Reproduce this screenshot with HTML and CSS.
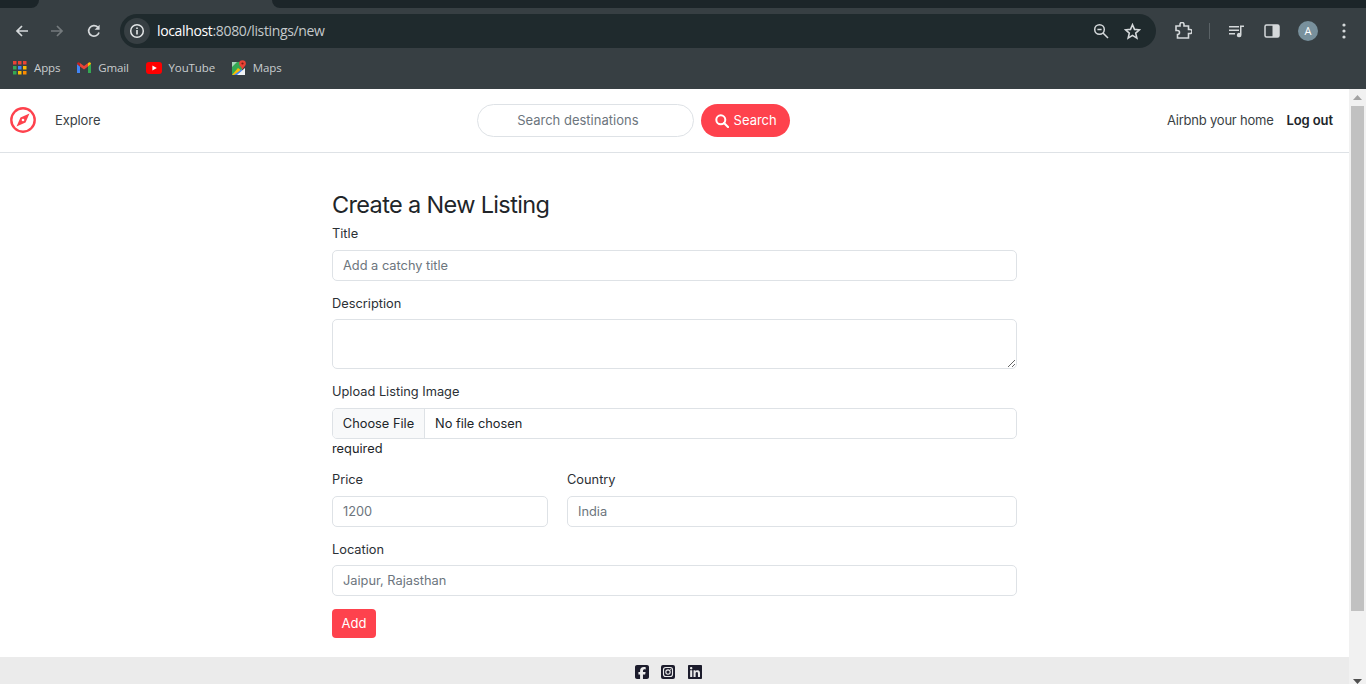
FILE: index.html
```html
<!DOCTYPE html>
<html>
<head>
    <meta charset="UTF-8">
    <title>Create a New Listing</title>
    <link rel="stylesheet" href="styles.css">
</head>
<body>
    <div class="browser">
        <div class="tabStrip">
            <div class="tabLeft"></div>
            <div class="tabActive"></div>
            <div class="tabRight"></div>
        </div>
        <div class="toolbar">
            <div class="navButtons">
                <svg class="navIcon" viewBox="0 0 16 16"><path d="M14 8H3M8 3L3 8l5 5" fill="none" stroke="#d5d9db" stroke-width="1.7"/></svg>
                <svg class="navIcon" viewBox="0 0 16 16"><path d="M2 8h11M8 3l5 5-5 5" fill="none" stroke="#747a7d" stroke-width="1.7"/></svg>
                <svg class="navIcon reloadIcon" viewBox="0 0 16 16"><path d="M13 9.500A5.300 5.300 0 1 1 11.800 4.200" fill="none" stroke="#d5d9db" stroke-width="1.7"/><path d="M13.600 1.800v5h-5z" fill="#d5d9db"/></svg>
            </div>
            <div class="addressBar">
                <span class="siteInfo">
                    <svg viewBox="0 0 16 16" width="16" height="16"><circle cx="8" cy="8" r="6.300" fill="none" stroke="#e3e6e7" stroke-width="1.500"/><path d="M8 7v4.400M8 4.400v1.500" stroke="#e3e6e7" stroke-width="1.600"/></svg>
                </span>
                <span class="url"><b>localhost</b>:8080/listings/new</span>
                <svg class="zoomIcon" viewBox="0 0 16 16" width="16" height="16"><circle cx="6.500" cy="6.500" r="4.800" fill="none" stroke="#d5d9db" stroke-width="1.500"/><path d="M10 10l5 5M4.400 6.500h4.200" stroke="#d5d9db" stroke-width="1.500"/></svg>
                <svg class="starIcon" viewBox="0 0 16 16" width="17" height="17"><path d="M8 1.600l1.900 4.400 4.700.4-3.600 3.100 1.100 4.700L8 11.700l-4.100 2.500L5 9.500 1.400 6.400l4.700-.4z" fill="none" stroke="#d5d9db" stroke-width="1.500"/></svg>
            </div>
            <div class="toolIcons">
                <svg class="extIcon" viewBox="0 0 18 18" width="18" height="18"><path d="M2 4.500h4V3a2 2 0 0 1 4 0v1.500h4.500V8H16a2 2 0 0 1 0 4h-1.500v4.500H3.500V13a2 2 0 0 0 0-4H2z" fill="none" stroke="#d5d9db" stroke-width="1.600" transform="translate(0 -.5)"/></svg>
                <span class="toolDivider"></span>
                <svg class="mediaIcon" viewBox="0 0 16 16" width="16" height="16"><path d="M0 3h10v1.500H0zM0 6.500h10V8H0zM0 10h6v1.500H0z" fill="#d5d9db"/><path d="M11 2.500h4V4h-2.500v8a2.300 2.300 0 1 1-1.500-2.100z" fill="#d5d9db"/></svg>
                <svg class="panelIcon" viewBox="0 0 16 16" width="16" height="16"><rect x="1" y="2" width="14" height="12" rx="1.500" fill="none" stroke="#d5d9db" stroke-width="1.500"/><rect x="8.500" y="2" width="6.500" height="12" fill="#d5d9db"/></svg>
                <span class="avatar">A</span>
                <svg class="menuIcon" viewBox="0 0 4 16" width="4" height="16"><circle cx="2" cy="2" r="1.600" fill="#d5d9db"/><circle cx="2" cy="8" r="1.600" fill="#d5d9db"/><circle cx="2" cy="14" r="1.600" fill="#d5d9db"/></svg>
            </div>
        </div>
        <div class="bookmarks">
            <span class="bookmark">
                <svg viewBox="0 0 14 14" width="14" height="14">
                    <path d="M0 0h3.500v3.500H0z" fill="#ea4335"/><path d="M5 0h3.500v3.500H5z" fill="#ea4335"/><path d="M10 0h3.500v3.500H10z" fill="#ea4335"/>
                    <path d="M0 5h3.500v3.500H0z" fill="#34a853"/><path d="M5 5h3.500v3.500H5z" fill="#4285f4"/><path d="M10 5h3.500v3.500H10z" fill="#fbbc04"/>
                    <path d="M0 10h3.500v3.500H0z" fill="#34a853"/><path d="M5 10h3.500v3.500H5z" fill="#fbbc04"/><path d="M10 10h3.500v3.500H10z" fill="#fb8c00"/>
                </svg>
                Apps
            </span>
            <span class="bookmark">
                <svg viewBox="0 0 14 11" width="14" height="11">
                    <path d="M0 2v9h3V4.500z" fill="#4285f4"/><path d="M11 4.500V11h3V2z" fill="#34a853"/>
                    <path d="M3 4.500L7 7.500l4-3V1L7 4 3 1z" fill="#ea4335"/><path d="M0 2l3 2.500V1L2 .4C1 -.1 0 .7 0 2z" fill="#c5221f"/><path d="M14 2l-3 2.500V1l1-.6c1-.5 2 .3 2 1.600z" fill="#fbbc04"/>
                </svg>
                Gmail
            </span>
            <span class="bookmark">
                <svg viewBox="0 0 16 12" width="16" height="12"><rect width="16" height="12" rx="3" fill="#f00"/><path d="M6.400 3.500L10.800 6l-4.400 2.500z" fill="#fff"/></svg>
                YouTube
            </span>
            <span class="bookmark">
                <svg viewBox="0 0 14 15" width="14" height="15">
                    <path d="M0 2h10v13H0z" fill="#34a853"/><path d="M0 15L6 8l4 3v4z" fill="#fbbc04"/><path d="M2 15l8-6v6z" fill="#4285f4"/><path d="M0 2h5L0 7z" fill="#a8d5ba"/><path d="M5 15l8-7v7z" fill="#f1f3f4"/>
                    <circle cx="10.500" cy="3.500" r="3.300" fill="#ea4335"/><circle cx="10.500" cy="3.500" r="1.100" fill="#7a1c14"/><path d="M8 5.500l2.500 4 2.500-4z" fill="#ea4335"/>
                </svg>
                Maps
            </span>
        </div>
    </div>

    <div class="viewport">
        <div class="page">
            <nav class="navbar">
                <svg class="logo" viewBox="0 0 26 26" width="26" height="26">
                    <circle cx="13" cy="13" r="11.700" fill="none" stroke="#fe424d" stroke-width="2.400"/>
                    <path d="M19.500 6.500L15.500 15.500 6.500 19.500 10.500 10.500z" fill="#fe424d"/>
                    <circle cx="13" cy="13" r="1.300" fill="#fff"/>
                </svg>
                <a class="navLink exploreLink">Explore</a>
                <form class="searchForm">
                    <input class="searchInput" type="text" placeholder="Search destinations">
                    <button class="searchBtn" type="button">
                        <svg viewBox="0 0 14 14" width="14" height="14"><circle cx="5.800" cy="5.800" r="4.500" fill="none" stroke="#fff" stroke-width="2"/><path d="M9 9l4 4" stroke="#fff" stroke-width="2.200" stroke-linecap="round"/></svg>
                        Search
                    </button>
                </form>
                <div class="navRight">
                    <a class="navLink homeLink">Airbnb your home</a>
                    <a class="navLink strong">Log out</a>
                </div>
            </nav>

            <main class="content">
                <h3 class="title">Create a New Listing</h3>
                <form class="listingForm">
                    <div class="field">
                        <label>Title</label>
                        <input class="control" type="text" placeholder="Add a catchy title">
                    </div>
                    <div class="field">
                        <label>Description</label>
                        <textarea class="control area"></textarea>
                    </div>
                    <div class="field upload">
                        <label>Upload Listing Image</label>
                        <input class="control fileControl" type="file">
                        <div class="hint">required</div>
                    </div>
                    <div class="twoCol">
                        <div class="field">
                            <label>Price</label>
                            <input class="control" type="text" placeholder="1200">
                        </div>
                        <div class="field">
                            <label>Country</label>
                            <input class="control" type="text" placeholder="India">
                        </div>
                    </div>
                    <div class="field">
                        <label>Location</label>
                        <input class="control" type="text" placeholder="Jaipur, Rajasthan">
                    </div>
                    <button class="addBtn" type="button">Add</button>
                </form>
            </main>

            <footer class="footer">
                <svg viewBox="0 0 448 512" width="14" height="16"><path fill="#1c1c2c" d="M64 32C28.700 32 0 60.700 0 96V416c0 35.300 28.700 64 64 64h98.200V334.200H109.400V256h52.800V222.300c0-87.100 39.400-127.500 125-127.500c16.200 0 44.200 3.200 55.700 6.400V172c-6-.6-16.500-1-29.600-1c-42 0-58.200 15.900-58.200 57.200V256h83.600l-14.400 78.200H255V480H384c35.300 0 64-28.700 64-64V96c0-35.300-28.700-64-64-64H64z"/></svg>
                <svg viewBox="0 0 448 512" width="14" height="16"><rect y="32" width="448" height="448" rx="64" fill="#1c1c2c"/><rect x="80" y="112" width="288" height="288" rx="72" fill="none" stroke="#eaeaea" stroke-width="36"/><circle cx="224" cy="256" r="70" fill="none" stroke="#eaeaea" stroke-width="36"/><circle cx="310" cy="170" r="18" fill="#eaeaea"/></svg>
                <svg viewBox="0 0 448 512" width="14" height="16"><path fill="#1c1c2c" d="M416 32H31.900C14.300 32 0 46.500 0 64.300v383.400C0 465.500 14.300 480 31.900 480H416c17.600 0 32-14.500 32-32.300V64.300c0-17.800-14.400-32.300-32-32.300zM135.400 416H69V202.200h66.500V416zm-33.200-243c-21.300 0-38.500-17.300-38.500-38.500S80.900 96 102.200 96c21.200 0 38.500 17.300 38.500 38.500 0 21.300-17.200 38.500-38.500 38.500zm282.100 243h-66.400V312c0-24.800-.5-56.700-34.500-56.700-34.600 0-39.900 27-39.900 54.900V416h-66.400V202.200h63.700v29.200h.9c8.900-16.800 30.600-34.500 62.900-34.500 67.200 0 79.700 44.300 79.700 101.900V416z"/></svg>
            </footer>
        </div>

        <div class="scrollbar">
            <svg class="scrollArrow" viewBox="0 0 9 5" width="9" height="5"><path d="M4.500 0L9 5H0z" fill="#a3a3a3"/></svg>
            <div class="scrollThumb"></div>
            <svg class="scrollArrow bottom" viewBox="0 0 9 5" width="9" height="5"><path d="M0 0h9L4.500 5z" fill="#505050"/></svg>
        </div>
    </div>
</body>
</html>
```

FILE: styles.css
```css
html, body {
    padding: 0;
    margin: 0;
    width: 100%;
    height: 100%;
    overflow: hidden;
}

body {
    font-family: "Inter", "Liberation Sans", sans-serif;
    background-color: #fff;
    color: #212529;
    font-size: 12.8px;
    line-height: 19.2px;
    display: flex;
    flex-direction: column;
}

/* browser chrome */

.browser {
    height: 89px;
    flex: none;
    background-color: #373f43;
    font-family: "Open Sans", "Liberation Sans", sans-serif;
}

.tabStrip {
    height: 8px;
    display: flex;
}

.tabLeft {
    width: 39px;
    background-color: #1c2529;
    border-bottom-right-radius: 8px;
}

.tabActive {
    width: 233px;
}

.tabRight {
    flex: 1;
    background-color: #1c2529;
    border-bottom-left-radius: 8px;
}

.toolbar {
    height: 46px;
    display: flex;
    align-items: center;
}

.navButtons {
    width: 120px;
    display: flex;
    align-items: center;
    gap: 19px;
    padding-left: 14px;
    box-sizing: border-box;
}

.navIcon {
    width: 16px;
    height: 16px;
    flex: none;
}

.reloadIcon {
    margin-left: 2px;
}

.addressBar {
    width: 1036px;
    height: 34px;
    display: flex;
    align-items: center;
    background-color: #1f2a2d;
    border-radius: 17px;
    box-sizing: border-box;
    padding-left: 4px;
}

.siteInfo {
    width: 26px;
    height: 26px;
    border-radius: 50%;
    background-color: #373f43;
    display: flex;
    align-items: center;
    justify-content: center;
}

.url {
    margin-left: 7px;
    font-size: 14px;
    color: #c4c9cb;
    letter-spacing: -0.35px;
}

.url b {
    font-weight: 400;
    color: #fff;
}

.zoomIcon {
    margin-left: auto;
    margin-right: 2px;
}

.starIcon {
    margin-left: 13px;
    margin-right: 15px;
}

.toolIcons {
    flex: 1;
    display: flex;
    align-items: center;
    padding-left: 18px;
}

.toolDivider {
    width: 1px;
    height: 16px;
    background-color: #5a6266;
    margin-left: 17px;
    margin-right: 19px;
}

.panelIcon {
    margin-left: 19px;
}

.avatar {
    width: 20px;
    height: 20px;
    margin-left: 18px;
    border-radius: 50%;
    background-color: #78909c;
    color: #fff;
    font-size: 11px;
    line-height: 20px;
    text-align: center;
}

.menuIcon {
    margin-left: 24px;
}

.bookmarks {
    height: 28px;
    display: flex;
    align-items: center;
    gap: 16.8px;
    padding-left: 13px;
    font-size: 11.5px;
    letter-spacing: -0.12px;
    color: #c9cdcf;
}

.bookmark {
    display: flex;
    align-items: center;
    gap: 7px;
}

/* page */

.viewport {
    flex: 1;
    display: flex;
    min-height: 0;
}

.page {
    flex: 1;
    display: flex;
    flex-direction: column;
    min-width: 0;
}

.navbar {
    height: 63px;
    flex: none;
    display: flex;
    align-items: center;
    border-bottom: 1px solid #dee2e6;
    padding-left: 10px;
    padding-right: 16px;
}

.logo {
    margin-bottom: 1px;
}

.navLink {
    color: #3a3f44;
    font-size: 13px;
    letter-spacing: -0.1px;
}

.exploreLink {
    margin-left: 19px;
}

.homeLink {
    letter-spacing: -0.22px;
}

.strong {
    color: #212529;
    font-weight: 600;
    margin-left: 13px;
}

.searchForm {
    margin-left: auto;
    display: flex;
    gap: 7px;
}

.searchInput {
    width: 217px;
    height: 33px;
    box-sizing: border-box;
    border: 1px solid #dee2e6;
    border-radius: 17px;
    padding: 0 10px 2px 39px;
    font: inherit;
    font-size: 13px;
    outline: none;
}

.searchBtn {
    width: 89px;
    height: 33px;
    border: none;
    border-radius: 17px;
    background-color: #fe424d;
    color: #fff;
    font: inherit;
    font-size: 13px;
    display: flex;
    align-items: center;
    justify-content: center;
    gap: 5px;
}

.navRight {
    margin-left: auto;
    display: flex;
    align-items: center;
}

.content {
    flex: 1;
    width: 685px;
    margin-left: 332px;
    padding-top: 36px;
}

.title {
    margin: 0;
    font-size: 23.5px;
    font-weight: 400;
    line-height: 32px;
    color: #212529;
    height: 35px;
    letter-spacing: -0.65px;
}

.field {
    margin-bottom: 13px;
}

.field label {
    display: block;
    margin-bottom: 5.600px;
    line-height: 20px;
    color: #2b3035;
}

.control {
    display: block;
    width: 100%;
    height: 31px;
    box-sizing: border-box;
    border: 1px solid #dee2e6;
    border-radius: 5px;
    padding: 0 10px;
    font: inherit;
    outline: none;
    background-color: #fff;
}

.control::placeholder,
.searchInput::placeholder {
    color: #6c757d;
    opacity: 1;
}

.area {
    height: 50px;
    padding-top: 5px;
}

.fileControl {
    padding: 0;
    line-height: 29px;
    color: #212529;
}

.fileControl::file-selector-button {
    height: 29px;
    width: 92px;
    margin: 0 10px 0 0;
    padding: 0;
    border: none;
    border-right: 1px solid #dee2e6;
    background-color: #f8f9fa;
    color: #212529;
    font: inherit;
}

.upload {
    margin-bottom: 12px;
}

.hint {
    line-height: 19.200px;
}

.twoCol {
    display: grid;
    grid-template-columns: 216px 1fr;
    column-gap: 19px;
}

.addBtn {
    display: block;
    width: 44px;
    height: 29px;
    border: none;
    border-radius: 4px;
    background-color: #fe424d;
    color: #fff;
    font: inherit;
    font-size: 13px;
}

.footer {
    height: 27px;
    flex: none;
    display: flex;
    align-items: center;
    justify-content: center;
    gap: 12.500px;
    background-color: #ebebeb;
    padding: 3px 13px 0 0;
    box-sizing: border-box;
}

/* fake scrollbar because the page is photographed without scrolling */

.scrollbar {
    width: 17px;
    flex: none;
    background-color: #f1f1f1;
    display: flex;
    flex-direction: column;
    align-items: center;
}

.scrollArrow {
    flex: none;
    margin-top: 6px;
}

.scrollThumb {
    width: 13px;
    height: 505px;
    margin-top: 6px;
    background-color: #c1c1c1;
}

.scrollArrow.bottom {
    margin-top: auto;
}
```
